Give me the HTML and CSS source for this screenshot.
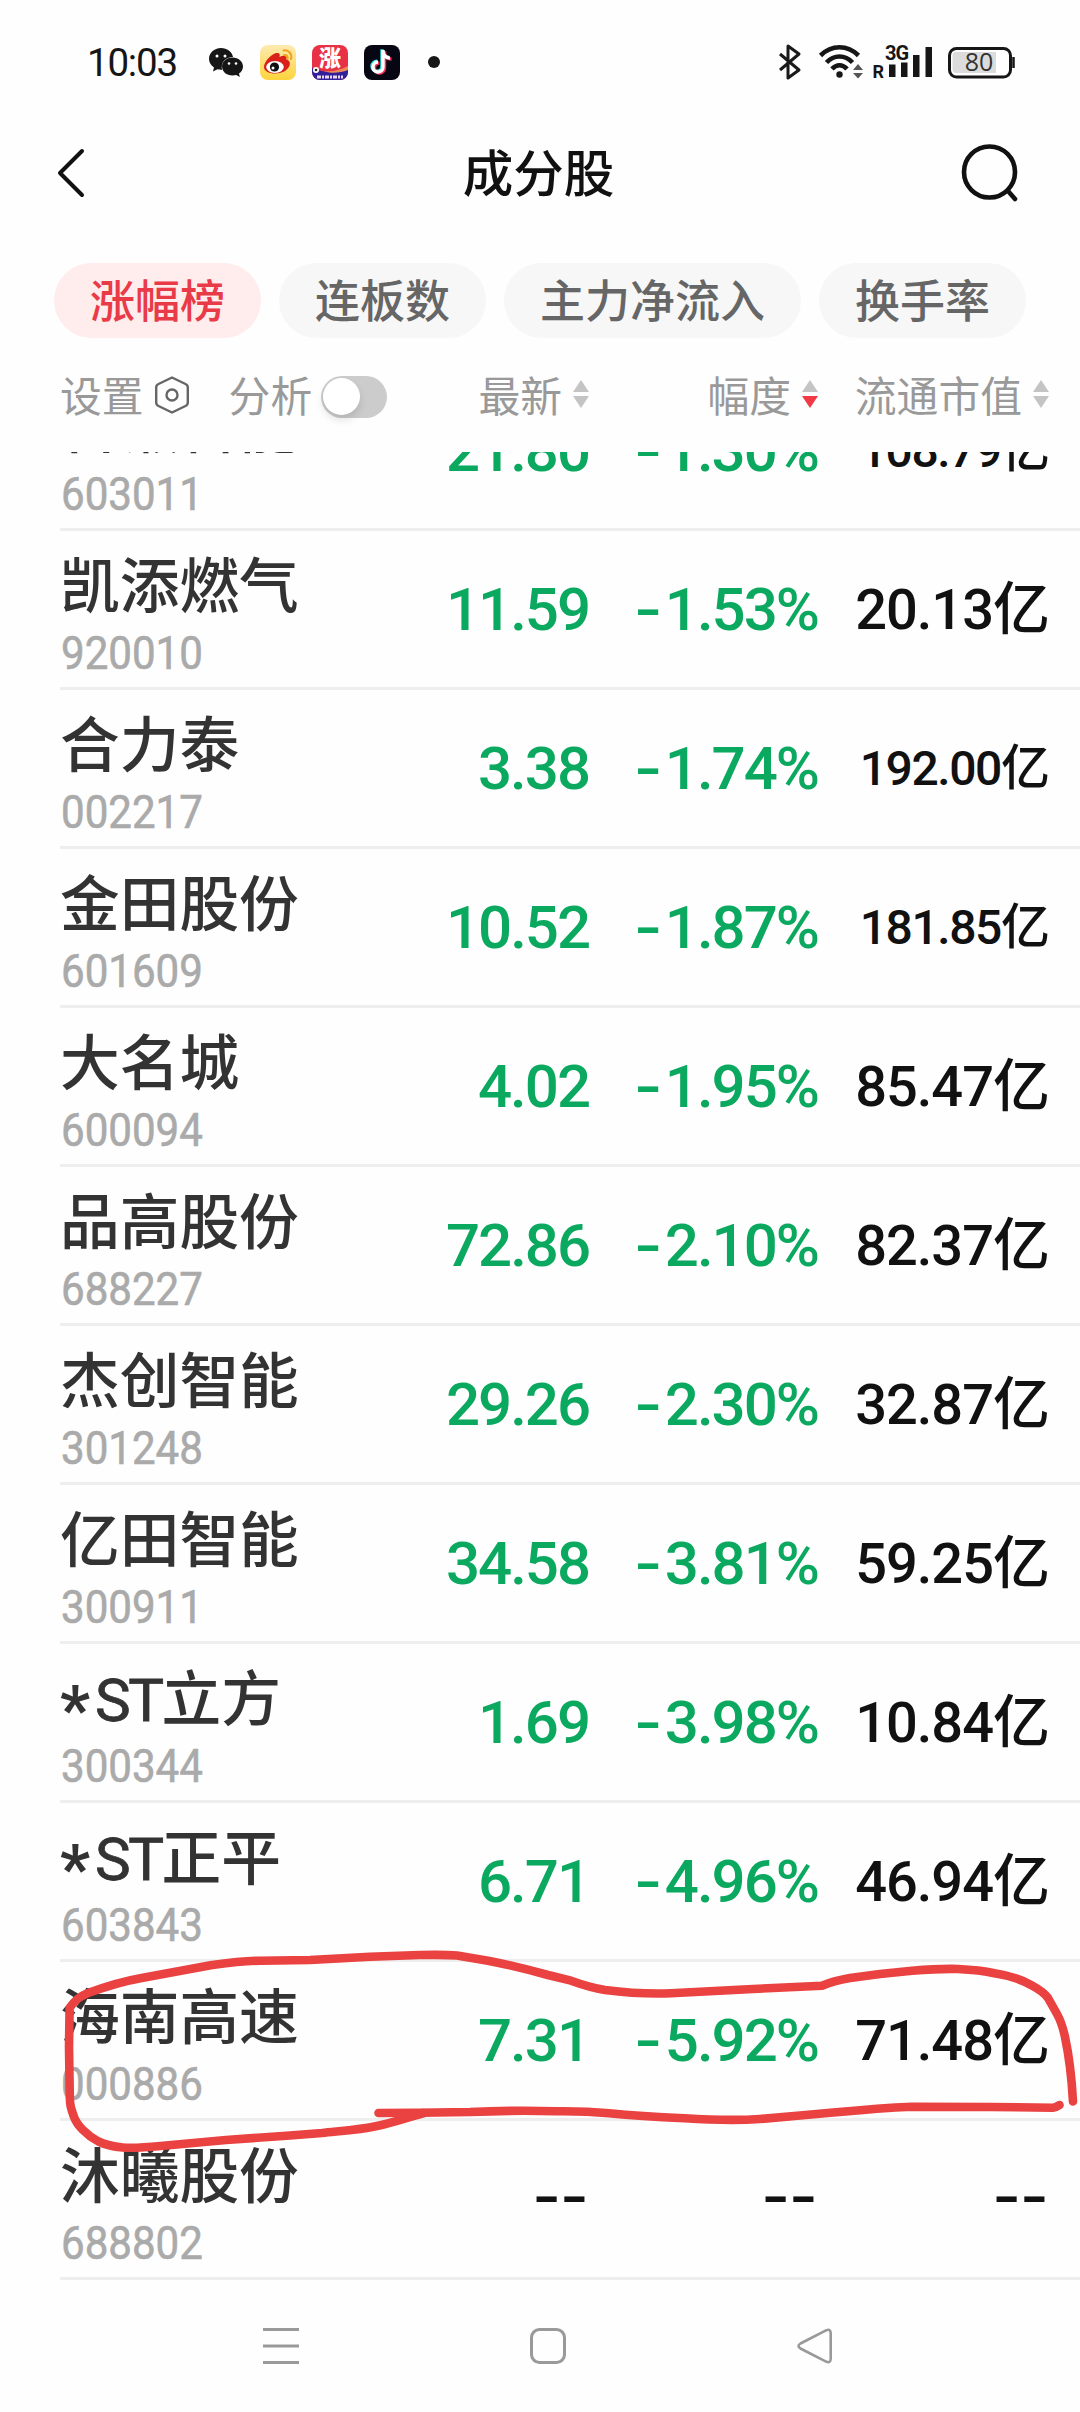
FILE: index.html
```html
<!DOCTYPE html>
<html lang="zh-CN">
<head>
<meta charset="utf-8">
<title>成分股</title>
<link rel="stylesheet" href="styles.css">
</head>
<body>
<div class="screen">
  <header class="status">
    <span class="clock">10:03</span>
    <svg class="s-apps" width="236" height="44" viewBox="204 40 236 44">
      <g fill="#161616">
        <path d="M221 48c-7 0-12 5-12 11 0 3.500 2 6.500 5 8.500l-1 4 4.500-2.200c1.800.5 3 .6 4.500.6-1.500-8 4-13 11-13C232 51.500 227 48 221 48z"/>
        <path d="M232.500 57.500c-6 0-10.500 4-10.500 9s4.500 9 10.500 9c1.300 0 2.500-.2 3.700-.5l3.600 2-.8-3.400c2.500-1.700 4-4.200 4-7.100 0-5-4.500-9-10.500-9z"/>
      </g>
      <g fill="#fff"><circle cx="217" cy="56" r="1.500"/><circle cx="225" cy="56" r="1.500"/><circle cx="229" cy="63.500" r="1.300"/><circle cx="236" cy="63.500" r="1.300"/></g>
      <linearGradient id="gw" x1="0" y1="0" x2="0" y2="1"><stop offset="0" stop-color="#fdeab0"/><stop offset="1" stop-color="#fdd43c"/></linearGradient>
      <rect x="260" y="45" width="36" height="35" rx="8" fill="url(#gw)"/>
      <path d="M264 67c0-6 9-15 14-14 2 .5 2 2 1.500 4 4-2 8-1.500 7 2.500 3 1 4 3 3 6-1.500 5-8 8-14 8-7 0-11.500-2.500-11.500-6.500z" fill="#d9201a"/>
      <ellipse cx="275" cy="67" rx="8.800" ry="6" fill="#fff"/><circle cx="274.500" cy="67" r="4.600" fill="#111"/><circle cx="273" cy="68" r="1.500" fill="#fff"/>
      <path d="M283.500 50.500c5-1 9 3.500 7.500 8.500M284 55c2.500-.5 4.300 1.500 3.500 4" fill="none" stroke="#f2a01f" stroke-width="2" stroke-linecap="round"/>
      <clipPath id="cz"><rect x="312" y="45" width="36" height="35" rx="8"/></clipPath>
      <g clip-path="url(#cz)"><rect x="312" y="45" width="36" height="35" fill="#e93145"/><path d="M312 68c10 5 26 5 36 0v13h-36z" fill="#32209a"/><path d="M323 71c9 1 18-1 25-5v4c-8 3-17 4-25 1z" fill="#ee8a55"/><circle cx="316" cy="70" r="3" fill="#fff"/><circle cx="316" cy="70" r="1.300" fill="#222"/>
      <text x="330" y="66" text-anchor="middle" class="app-word">涨</text><path d="M317 77h26" stroke="#e8d8ef" stroke-width="3" stroke-dasharray="4 1 2 1"/></g>
      <rect x="364" y="45" width="36" height="35" rx="8" fill="#070713"/>
      <g fill="none" stroke-width="3.400"><path d="M383 50v17a5 5 0 1 1-5-5M383 51c0 4 3 7 7 7" stroke="#32e6e2" transform="translate(-1 -.8)"/><path d="M383 50v17a5 5 0 1 1-5-5M383 51c0 4 3 7 7 7" stroke="#f43058" transform="translate(1.500 1)"/><path d="M383 50v17a5 5 0 1 1-5-5M383 51c0 4 3 7 7 7" stroke="#fff"/></g>
      <circle cx="434" cy="62" r="6" fill="#161616"/>
    </svg>
    <svg class="s-sys" width="246" height="44" viewBox="774 40 246 44">
      <path d="M780 54l19 16-11 8V46l11 8-19 16" fill="none" stroke="#1a1a1a" stroke-width="3" stroke-linejoin="round"/>
      <g fill="none" stroke="#161616" stroke-width="4.600"><path d="M820.500 55.500c11-11 27-11 38 0"/><path d="M826.500 62.500c7.500-8 18.500-8 26 0"/><path d="M832 69c4.500-5 10.500-5 15 0"/></g>
      <circle cx="839.500" cy="74.500" r="3.200" fill="#161616"/>
      <path d="M853 70l5-6 5 6zM853 73h10l-5 5.500z" fill="#555"/>
      <text x="872.500" y="78" class="sig-r">R</text>
      <text x="885" y="60" class="sig-g">3G</text>
      <path d="M889 64.500h6.500V77H889zM901 62.500h6.500V77H901zM913 55h6.500v22H913zM925.500 47h6.500v30h-6.500z" fill="#161616"/>
      <rect x="949.500" y="48.500" width="61" height="28.500" rx="7" fill="#fff" stroke="#161616" stroke-width="3"/>
      <path d="M956 52h40v21h-40q-3.500 0-3.500-4V56q0-4 3.500-4z" fill="#dcdcdc"/>
      <path d="M1013.500 57v11" stroke="#161616" stroke-width="2.500"/>
      <text x="979" y="71.300" text-anchor="middle" class="batt">80</text>
    </svg>
  </header>

  <nav class="topbar">
    <svg width="32" height="56" viewBox="54 145 32 56"><path d="M82 151L60 173l22 22" fill="none" stroke="#111" stroke-width="4" stroke-linecap="round" stroke-linejoin="round"/></svg>
    <h1 class="title">成分股</h1>
    <svg width="60" height="60" viewBox="960 143 60 60"><g fill="none" stroke="#111" stroke-width="4.600" stroke-linecap="round"><circle cx="989.500" cy="172" r="25.500"/><path d="M1008 191l7 8"/></g></svg>
  </nav>

  <div class="chips">
    <span class="chip chip-on">涨幅榜</span><span class="chip">连板数</span><span class="chip">主力净流入</span><span class="chip">换手率</span>
  </div>

  <div class="grid head">
    <div class="tools">
      <span>设置</span>
      <svg class="hex" width="36" height="40" viewBox="0 0 36 40"><g fill="none" stroke="#666" stroke-width="2.400"><path d="M18 2.500l13.500 6.500q2.300 1 2.300 3.500v15q0 2.500-2.300 3.500L18 37.500 4.500 31q-2.300-1-2.300-3.500v-15q0-2.500 2.300-3.500z" stroke-linejoin="round"/><circle cx="18" cy="20" r="5.500"/></g></svg>
      <span class="ana">分析</span>
      <i class="toggle"></i>
    </div>
    <div class="col">最新<svg class="sort" width="16" height="28" viewBox="0 0 16 28"><path d="M8 0l8 12H0z"/><path d="M0 16h16l-8 12z"/></svg></div>
    <div class="col">幅度<svg class="sort" width="16" height="28" viewBox="0 0 16 28"><path d="M8 0l8 12H0z"/><path class="desc" d="M0 16h16l-8 12z"/></svg></div>
    <div class="col">流通市值<svg class="sort" width="16" height="28" viewBox="0 0 16 28"><path d="M8 0l8 12H0z"/><path d="M0 16h16l-8 12z"/></svg></div>
  </div>

  <main class="list">
    <div class="grid row"><div class="stock"><b>合锻智能</b><small>603011</small></div><span class="num">21.80</span><span class="num"><i>-</i>1.30%</span><span class="cap cap-s">108.79<em>亿</em></span></div>
    <div class="grid row"><div class="stock"><b>凯添燃气</b><small>920010</small></div><span class="num">11.59</span><span class="num"><i>-</i>1.53%</span><span class="cap">20.13<em>亿</em></span></div>
    <div class="grid row"><div class="stock"><b>合力泰</b><small>002217</small></div><span class="num">3.38</span><span class="num"><i>-</i>1.74%</span><span class="cap cap-s">192.00<em>亿</em></span></div>
    <div class="grid row"><div class="stock"><b>金田股份</b><small>601609</small></div><span class="num">10.52</span><span class="num"><i>-</i>1.87%</span><span class="cap cap-s">181.85<em>亿</em></span></div>
    <div class="grid row"><div class="stock"><b>大名城</b><small>600094</small></div><span class="num">4.02</span><span class="num"><i>-</i>1.95%</span><span class="cap">85.47<em>亿</em></span></div>
    <div class="grid row"><div class="stock"><b>品高股份</b><small>688227</small></div><span class="num">72.86</span><span class="num"><i>-</i>2.10%</span><span class="cap">82.37<em>亿</em></span></div>
    <div class="grid row"><div class="stock"><b>杰创智能</b><small>301248</small></div><span class="num">29.26</span><span class="num"><i>-</i>2.30%</span><span class="cap">32.87<em>亿</em></span></div>
    <div class="grid row"><div class="stock"><b>亿田智能</b><small>300911</small></div><span class="num">34.58</span><span class="num"><i>-</i>3.81%</span><span class="cap">59.25<em>亿</em></span></div>
    <div class="grid row"><div class="stock"><b><i class="star">*</i><span class="st">ST</span>立方</b><small>300344</small></div><span class="num">1.69</span><span class="num"><i>-</i>3.98%</span><span class="cap">10.84<em>亿</em></span></div>
    <div class="grid row"><div class="stock"><b><i class="star">*</i><span class="st">ST</span>正平</b><small>603843</small></div><span class="num">6.71</span><span class="num"><i>-</i>4.96%</span><span class="cap">46.94<em>亿</em></span></div>
    <div class="grid row"><div class="stock"><b>海南高速</b><small>000886</small></div><span class="num">7.31</span><span class="num"><i>-</i>5.92%</span><span class="cap">71.48<em>亿</em></span></div>
    <div class="grid row"><div class="stock"><b>沐曦股份</b><small>688802</small></div><span class="num none">--</span><span class="num none">--</span><span class="num none">--</span></div>
  </main>

  <footer class="sysnav">
    <svg width="36" height="36" viewBox="0 0 36 36"><path d="M0 1.500h36M0 18h36M0 34.500h36"/></svg>
    <svg width="36" height="36" viewBox="0 0 36 36"><rect x="1.500" y="1.500" width="33" height="33" rx="8"/></svg>
    <svg width="36" height="36" viewBox="0 0 36 36"><path d="M29.500 2.200L3.500 15.500q-4 2.500 0 5l26 13.300q4.200 1.500 4.200-3V5.200q0-4.500-4.200-3z" stroke-width="2.600"/></svg>
  </footer>

  <svg class="marker" width="1040" height="220" viewBox="40 1940 1040 220">
    <path d="M424 2113C405 2118 395 2122 377 2126S340 2131 322 2133L290 2135.500 226 2140 160.500 2146Q135 2148.500 122.600 2147.500 108 2146 98.500 2141.500C86 2135 77 2125 74 2117 70.500 2107 70 2105 69.800 2097L69 2047 69.600 2008C75 2000 79 1997 88 1993 107 1986 124 1981 143 1977.700L212 1965C230 1962.500 240 1961 260 1960.700L310 1960 370 1956.700 420 1955Q445 1954.500 457 1955.500L488 1960.700Q515 1966 548 1975L571 1980.700Q590 1987.500 605 1990 640 1994.500 671 1993.300L753 1989 822 1985.700Q833 1981 850 1978L880 1974 912 1970.700Q940 1968.500 958 1969 980 1970 994.500 1973.300 1018 1977 1032.400 1985.700 1044 1992 1048 1998L1057 2014Q1062 2023 1065 2037 1071 2065 1073 2101.500"/>
    <path d="M378.500 2113L419 2112.700 470 2112Q515 2110 556.500 2111.300 585 2111 609 2113.300 640 2116.500 684.600 2118.300 730 2121 760 2119L800 2115.500 836 2112.300Q880 2108 912 2106.700L990 2107 1053 2107.700Q1056 2107.500 1059.500 2105"/>
  </svg>
</div>
</body>
</html>
```

FILE: styles.css
```css
* { box-sizing: border-box; }
body {
  margin: 0;
  background: #fefefe;
  font-family: "Noto Sans CJK SC", sans-serif;
  color: #111;
}
svg { display: block; flex: none; }
em, i { font-style: normal; }
.screen { position: relative; width: 1080px; height: 2412px; overflow: hidden; display: flex; flex-direction: column; }

.status { height: 124px; padding: 0 60px 0 87px; display: flex; align-items: center; }
.clock { font: 400 38.500px/44px Roboto, sans-serif; width: 117px; padding-top: 2px; letter-spacing: -1.200px; color: #161616; }
.s-sys { margin-left: auto; }
.app-word { font: 900 22px "Noto Sans CJK SC", sans-serif; fill: #fff; }
.sig-r { font: 700 18px Roboto, sans-serif; fill: #161616; }
.sig-g { font: 700 20px Roboto, sans-serif; fill: #161616; letter-spacing: -1px; }
.batt { font: 400 25px "Open Sans", sans-serif; fill: #333; }

.topbar { height: 98px; padding: 0 60px 0 54px; display: flex; align-items: center; justify-content: space-between; }
.title { margin: 0 0 6px 31px; width: 152px; font-size: 50.500px; line-height: 60px; font-weight: 500; text-align: center; white-space: nowrap; }

.chips { display: flex; gap: 18px; padding: 41px 0 0 54px; }
.chip { height: 75px; padding: 0 36px; border-radius: 38px; background: #f7f7f7; color: #666; font-size: 45px; line-height: 71px; font-weight: 500; }
.chip-on { background: #ffeced; color: #e93a48; }

.grid { display: grid; grid-template-columns: 330px 199px 229px 231px; align-items: center; }
.head { height: 114px; flex: none; padding: 5px 0 0 60px; align-items: start; align-content: start; font-size: 41.800px; line-height: 102px; color: #999; }
.tools { display: flex; align-items: center; height: 104px; }
.tools span { height: 104px; }
.hex { margin: 0 0 0 10px; }
.ana { margin-left: 39px; }
.toggle { width: 66px; height: 42px; margin: 4px 0 0 9px; border-radius: 21px; background: #ccc; display: block; padding: 2px; }
.toggle::before { content: ""; display: block; width: 37px; height: 37px; border-radius: 50%; background: #fff; box-shadow: 0 5px 8px rgba(0,0,0,.12); }
.col { display: flex; justify-content: flex-end; align-items: center; gap: 11px; height: 102px; white-space: nowrap; }
.sort { fill: #c4c4c4; }
.desc { fill: #f03a46; }

.list { height: 1828px; flex: none; overflow: hidden; padding-left: 60px; }
.row { height: 159px; border-bottom: 3px solid #eee; }
.row:first-child { margin-top: -80px; }
.stock { display: flex; flex-direction: column; align-items: flex-start; height: 156px; padding-top: 11px; }
.stock b { font-size: 59.700px; line-height: 80px; font-weight: 500; color: #333; white-space: nowrap; }
.row:first-child b { line-height: 78px; margin-bottom: 2px; }
.stock small { font: 400 46px/54px Roboto, sans-serif; color: #aaa; transform: scaleX(.915); transform-origin: left; margin: 4px 0 0 1px; -webkit-text-stroke: .6px #aaa; }
.star { display: inline-block; width: 35px; font: 700 66px/60px Roboto, sans-serif; transform: translateY(12px); }
.st { font: 400 60px/60px Roboto, sans-serif; letter-spacing: -2.500px; -webkit-text-stroke: .8px #333; }
.num { font: 500 60px/70px Roboto, sans-serif; letter-spacing: -2px; color: #0ba860; text-align: right; padding: 1px 0 0; }
.num i { display: inline-block; letter-spacing: 0; margin-right: 5px; transform: translateX(-1px) scaleX(1.3); transform-origin: center; }
.none { color: #111; letter-spacing: 1px; transform: scaleX(1.3); transform-origin: right; margin-top: -5px; }
.cap { font: 500 56px/70px Roboto, sans-serif; letter-spacing: -1px; text-align: right; white-space: nowrap; padding-top: 1px; }
.cap em { font: 500 57px/60px "Noto Sans CJK SC", sans-serif; letter-spacing: 0; margin-right: -1px; }
.cap-s { font-size: 48px; letter-spacing: -1.400px; padding: 2px 0 0; }
.cap-s em { font-size: 49px; }

.sysnav { height: 132px; padding: 48px 247px 0 263px; display: flex; justify-content: space-between; }
.sysnav svg { fill: none; stroke: #999; stroke-width: 3; }

.marker { position: absolute; left: 40px; top: 1940px; fill: none; stroke: #ea4141; stroke-width: 8.600; stroke-linecap: round; stroke-linejoin: round; }
```
